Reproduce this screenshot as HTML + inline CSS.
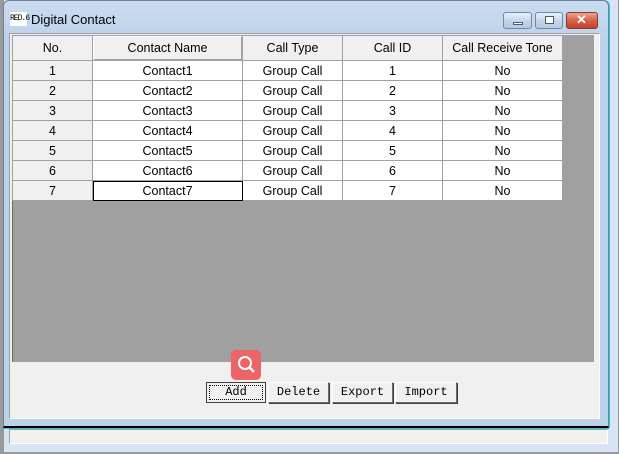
<!DOCTYPE html>
<html><head><style>
*{margin:0;padding:0;box-sizing:border-box}
body{width:619px;height:454px;position:relative;overflow:hidden;background:#d8e6f4;font-family:"Liberation Sans",sans-serif}
.a{position:absolute}
table{border-collapse:collapse;position:absolute;left:12px;top:35px;font-size:12.5px;color:#000}
td{height:20px;border:1px solid #a0a0a0;text-align:center;background:#fff;padding:0}
td.h{background:#f0f0f0}
tr.hd td{height:25px;background:#f0f0f0;border-color:#a0a0a0}
.btn{position:absolute;top:382px;height:21px;background:#f0f0f0;border:1px solid;border-color:#fff #6a6a6a #6a6a6a #fff;box-shadow:1px 1px 0 #404040;font-family:"Liberation Mono",monospace;font-size:12px;text-align:center;line-height:18px}
.tb{position:absolute;top:12px;height:17px;border:1px solid #6f87a8;border-radius:3px;background:linear-gradient(#eaf1f9,#c5d6ea 50%,#b5c9e2)}
</style></head><body>
<div class="a" style="left:0;top:0;width:619px;height:454px;background:#9a9a9a"></div>
<div class="a" style="left:4px;top:0;width:614px;height:452px;background:#d6e4f3"></div>
<div class="a" style="left:3px;top:0;width:606px;height:428px;background:linear-gradient(#cadcf0,#bcd2ea 40px);border:1px solid #6e7f96;border-radius:6px 6px 0 0;border-bottom:2px solid #000;box-shadow:1px 0 0 #2bc4e0,0 1px 0 #2bc4e0"></div>
<div class="a" style="left:10px;top:12px;width:17px;height:14px;background:#fff;font-size:8px;line-height:14px;color:#000;font-family:'Liberation Mono',monospace;letter-spacing:-1px">RED.6</div>
<div class="a" style="left:31px;top:12px;font-size:13px;color:#000">Digital Contact</div>
<div class="tb" style="left:503px;width:29px"><div class="a" style="left:9px;top:9px;width:10px;height:3px;background:#fff;border:1px solid #4a5a70"></div></div>
<div class="tb" style="left:535px;width:28px"><div class="a" style="left:9px;top:3px;width:9px;height:8px;border:1px solid #4a5a70;background:#fff"></div></div>
<div class="tb" style="left:566px;width:32px;background:linear-gradient(#e8a593,#d5624c 50%,#c2412b);border-color:#8a3a2c"><div class="a" style="left:9px;top:-1px;color:#fff;font-weight:bold;font-size:13px">✕</div></div>
<div class="a" style="left:9px;top:33px;width:591px;height:386px;background:#f0f0f0;border:1px solid;border-color:#a0a0a0 #fff #fff #a0a0a0"></div>
<div class="a" style="left:12px;top:35px;width:582px;height:327px;background:#a0a0a0;border-left:1px solid #696969"></div>
<table>
<tr class="hd"><td style="width:80px">No.</td><td style="width:150px;box-shadow:inset 1px 1px 0 #fff,inset -1px -1px 0 #a0a0a0">Contact Name</td><td style="width:100px">Call Type</td><td style="width:100px">Call ID</td><td style="width:120px">Call Receive Tone</td></tr>
<tr><td class="h">1</td><td>Contact1</td><td>Group Call</td><td>1</td><td>No</td></tr>
<tr><td class="h">2</td><td>Contact2</td><td>Group Call</td><td>2</td><td>No</td></tr>
<tr><td class="h">3</td><td>Contact3</td><td>Group Call</td><td>3</td><td>No</td></tr>
<tr><td class="h">4</td><td>Contact4</td><td>Group Call</td><td>4</td><td>No</td></tr>
<tr><td class="h">5</td><td>Contact5</td><td>Group Call</td><td>5</td><td>No</td></tr>
<tr><td class="h">6</td><td>Contact6</td><td>Group Call</td><td>6</td><td>No</td></tr>
<tr><td class="h">7</td><td style="outline:1px solid #000;outline-offset:-1px">Contact7</td><td>Group Call</td><td>7</td><td>No</td></tr>
</table>
<div class="a" style="left:231px;top:350px;width:30px;height:30px;border-radius:5px;background:#ec6466"></div>
<svg class="a" style="left:231px;top:350px" width="30" height="30"><circle cx="14" cy="13" r="6" fill="none" stroke="#fff" stroke-width="2"/><line x1="18.5" y1="17.5" x2="23" y2="22" stroke="#fff" stroke-width="2.5"/></svg>
<div class="btn" style="left:206px;width:60px;border-color:#404040;box-shadow:none"><div style="border:1px dotted #000;margin:2px;line-height:13px">Add</div></div>
<div class="btn" style="left:268px;width:61px">Delete</div>
<div class="btn" style="left:332px;width:61px">Export</div>
<div class="btn" style="left:395px;width:62px">Import</div>
<div class="a" style="left:9px;top:429px;width:599px;height:15px;background:#f0f0f0;border:1px solid;border-color:#a0a0a0 #fff #fff #a0a0a0"></div>
</body></html>
